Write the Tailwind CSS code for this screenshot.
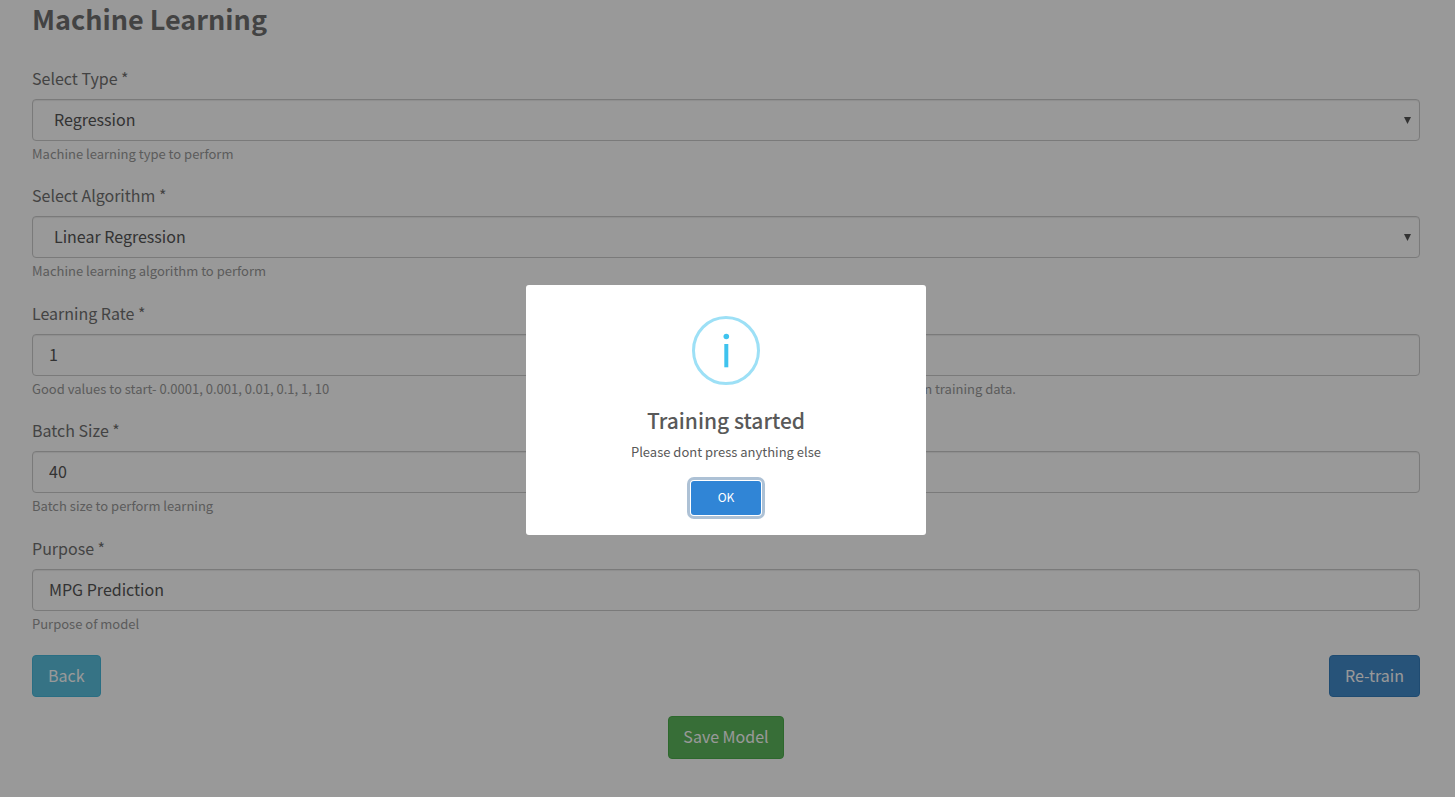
<!DOCTYPE html>
<html lang="en">
<head>
<meta charset="utf-8">
<meta name="viewport" content="width=device-width, initial-scale=1">
<title>Machine Learning</title>
<script src="https://cdn.jsdelivr.net/npm/@tailwindcss/browser@4"></script>
</head>
<body class="min-h-screen overflow-hidden bg-white font-['Noto_Sans_CJK_SC','Source_Sans_Pro',sans-serif] text-[16px] leading-6 text-[#717171]">
<main class="pl-8 pr-[35px]">
  <h1 class="pt-[3px] text-[27px] leading-8 font-bold">Machine Learning</h1>
  <form>
    <div class="mt-[31px] grid min-h-[587px] auto-rows-fr">
      <div>
        <label for="type" class="block">Select Type *</label>
        <div class="relative mt-[9px]">
          <select id="type" class="block h-[42px] w-full appearance-none rounded border border-[#ccc] bg-white px-[21px] pb-0.5 text-[#555] shadow-[inset_0_1px_1px_rgba(0,0,0,0.075)]"><option>Regression</option></select>
          <svg class="pointer-events-none absolute top-[18px] right-[9px] h-[7px] w-[7px]" viewBox="0 0 7 7" fill="#555" aria-hidden="true"><path d="M0 0h7L3.5 7z"/></svg>
        </div>
        <p class="mt-[3px] text-[13px] leading-5 text-[#999]">Machine learning type to perform</p>
      </div>
      <div>
        <label for="algorithm" class="block">Select Algorithm *</label>
        <div class="relative mt-[9px]">
          <select id="algorithm" class="block h-[42px] w-full appearance-none rounded border border-[#ccc] bg-white px-[21px] pb-0.5 text-[#555] shadow-[inset_0_1px_1px_rgba(0,0,0,0.075)]"><option>Linear Regression</option></select>
          <svg class="pointer-events-none absolute top-[18px] right-[9px] h-[7px] w-[7px]" viewBox="0 0 7 7" fill="#555" aria-hidden="true"><path d="M0 0h7L3.5 7z"/></svg>
        </div>
        <p class="mt-[3px] text-[13px] leading-5 text-[#999]">Machine learning algorithm to perform</p>
      </div>
      <div class="grid grid-cols-2 gap-[30px]">
        <div>
          <label for="rate" class="block">Learning Rate *</label>
          <input id="rate" type="text" value="1" class="mt-[9px] block h-[42px] w-full rounded border border-[#ccc] bg-white px-4 pb-0.5 text-[#555] shadow-[inset_0_1px_1px_rgba(0,0,0,0.075)]">
          <p class="mt-[3px] text-[13px] leading-5 text-[#999]">Good values to start- 0.0001, 0.001, 0.01, 0.1, 1, 10</p>
        </div>
        <div>
          <label for="epochs" class="block">Epochs *</label>
          <input id="epochs" type="text" class="mt-[9px] block h-[42px] w-full rounded border border-[#ccc] bg-white px-4 pb-0.5 text-[#555] shadow-[inset_0_1px_1px_rgba(0,0,0,0.075)]">
          <p class="mt-[3px] text-[13px] leading-5 text-[#999]">Number of cycles to perform on training data.</p>
        </div>
      </div>
      <div class="grid grid-cols-2 gap-[30px]">
        <div>
          <label for="batch" class="block">Batch Size *</label>
          <input id="batch" type="text" value="40" class="mt-[9px] block h-[42px] w-full rounded border border-[#ccc] bg-white px-4 pb-0.5 text-[#555] shadow-[inset_0_1px_1px_rgba(0,0,0,0.075)]">
          <p class="mt-[3px] text-[13px] leading-5 text-[#999]">Batch size to perform learning</p>
        </div>
        <div class="pt-6">
          <input type="text" aria-label="Test split" class="mt-[9px] block h-[42px] w-full rounded border border-[#ccc] bg-white px-4 pb-0.5 text-[#555] shadow-[inset_0_1px_1px_rgba(0,0,0,0.075)]">
        </div>
      </div>
      <div>
        <label for="purpose" class="block">Purpose *</label>
        <input id="purpose" type="text" value="MPG Prediction" class="mt-[9px] block h-[42px] w-full rounded border border-[#ccc] bg-white px-4 pb-0.5 text-[#555] shadow-[inset_0_1px_1px_rgba(0,0,0,0.075)]">
        <p class="mt-[3px] text-[13px] leading-5 text-[#999]">Purpose of model</p>
      </div>
    </div>
    <div class="mt-0.5 flex justify-between text-white">
      <button type="button" class="h-[42px] rounded border border-[#46b8da] bg-[#5bc0de] px-[15px] pb-0.5">Back</button>
      <button type="button" class="h-[42px] rounded border border-[#357ebd] bg-[#428bca] px-[15px] pb-0.5">Re-train</button>
    </div>
    <div class="mt-[19px] flex justify-center">
      <button type="button" class="h-[43px] rounded border border-[#4cae4c] bg-[#5cb85c] px-[14px] pb-[3px] text-white">Save Model</button>
    </div>
  </form>
</main>

<div class="fixed inset-0 flex items-center justify-center bg-black/40 pt-[22px] pr-[3px]">
  <section role="dialog" aria-modal="true" aria-labelledby="dialog-title" class="flex w-[400px] flex-col items-center rounded-[3px] bg-white pt-[31px] pb-5 text-[#595959]">
    <svg class="h-[69px] w-[68px]" viewBox="0 0 68 69" aria-hidden="true">
      <ellipse cx="34" cy="34.5" rx="32.5" ry="33" fill="none" stroke="#9de0f6" stroke-width="3"/>
      <circle cx="34.3" cy="20.5" r="2.8" fill="#3fc3ee"/>
      <path d="M32.3 28h4v23.3h-4z" fill="#3fc3ee"/>
    </svg>
    <h2 id="dialog-title" class="mt-[19px] text-[21px] leading-8 font-medium">Training started</h2>
    <p class="mt-1 text-[13px] leading-6">Please dont press anything else</p>
    <button type="button" class="mt-[17px] h-[34px] w-[70px] rounded-[3px] bg-[#3085d6] pb-px text-[12px] text-white shadow-[0_0_0_1px_#fff,0_0_0_4px_rgba(50,100,150,0.4)]">OK</button>
  </section>
</div>
</body>
</html>
